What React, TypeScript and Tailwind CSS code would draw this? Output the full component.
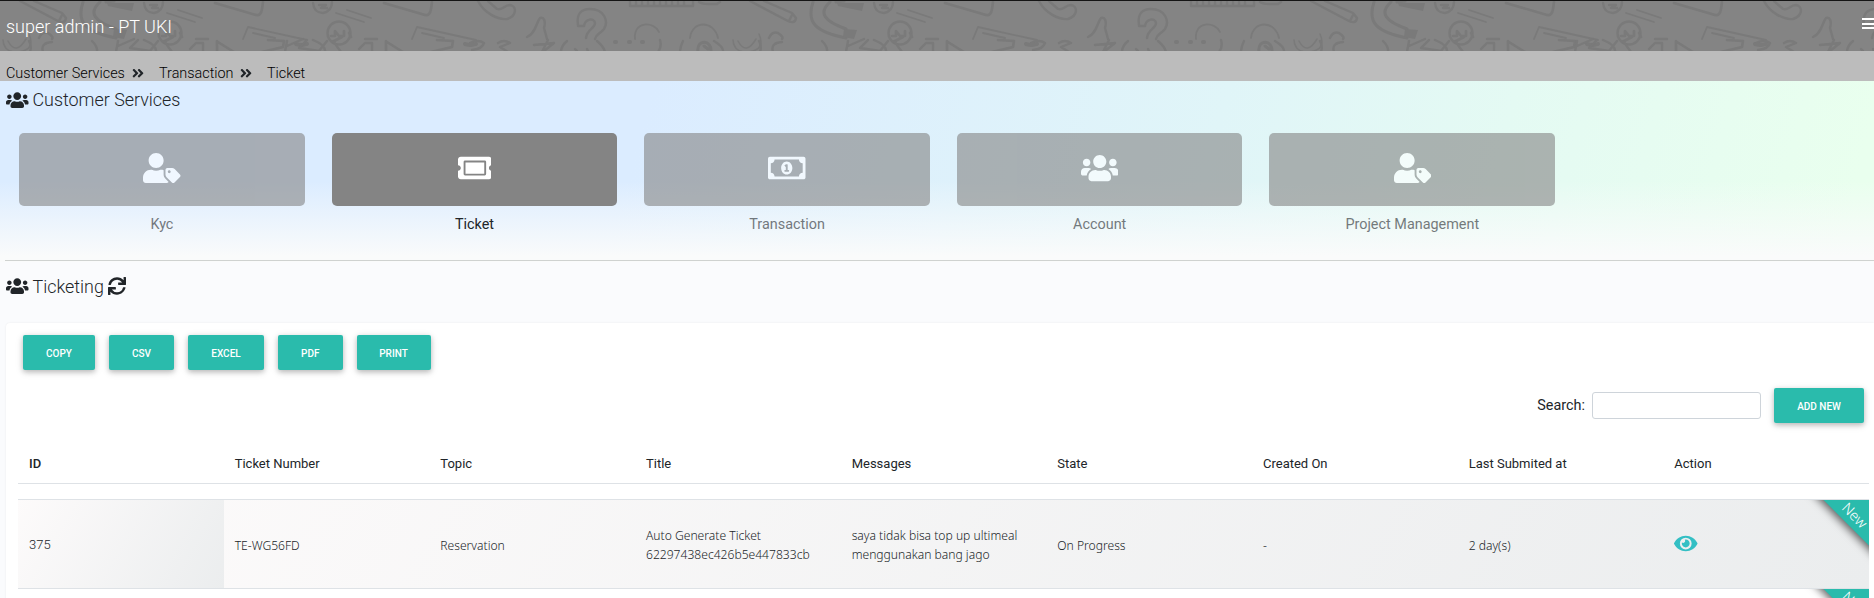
import React from "react";
import {
  FaAngleDoubleRight,
  FaEye,
  FaRegMoneyBillAlt,
  FaSync,
  FaTicketAlt,
  FaUsers,
  FaUserTag,
} from "react-icons/fa";

const services = [
  { name: "Kyc", icon: <FaUserTag className="h-[30px] w-[37.5px]" />, active: false },
  { name: "Ticket", icon: <FaTicketAlt className="h-[30px] w-[33.75px]" />, active: true },
  { name: "Transaction", icon: <FaRegMoneyBillAlt className="h-[30px] w-[37.5px]" />, active: false },
  { name: "Account", icon: <FaUsers className="h-[30px] w-[37.5px]" />, active: false },
  { name: "Project Management", icon: <FaUserTag className="h-[30px] w-[37.5px]" />, active: false },
];

const exports = [
  { name: "Copy", width: "w-[72px]" },
  { name: "CSV", width: "w-[65px]" },
  { name: "Excel", width: "w-[76px]" },
  { name: "PDF", width: "w-[64.5px]" },
  { name: "Print", width: "w-[74px]" },
];

const columns = [
  "ID",
  "Ticket Number",
  "Topic",
  "Title",
  "Messages",
  "State",
  "Created On",
  "Last Submited at",
  "Action",
];

const button =
  "h-[35px] rounded-[2px] bg-[#2abbac] pt-[1px] text-[10px] font-medium uppercase text-white shadow-[0_2px_5px_0_rgba(0,0,0,0.2),0_2px_8px_0_rgba(0,0,0,0.12)]";

function Doodles() {
  return (
    <svg
      className="absolute inset-0 h-full w-full"
      fill="none"
      stroke="#7a7a7a"
      strokeWidth="2.4"
      strokeLinecap="round"
      strokeLinejoin="round"
    >
      <defs>
        <g id="phone">
          <path d="M8 0C14 12 28 19 37 18C47 15 47 5 40 4C34 4 32 10 27 8L18 0" />
          <path d="M57 36C66 32 66 22 70 17C74 16 76 20 74 27L77 38" />
          <path d="M108 24C106 12 112 8 120 8C134 8 139 20 134 28C130 33 126 33 125 38M108 25L114 25C115 18 124 16 125 22C125 28 117 28 116 37" />
          <path d="M160 0V5H223V0M166 1V4M172 1V4M178 1V4M184 1V4M190 1V4M196 1V4M202 1V4M208 1V4M214 1V4M229 1Q232 3 238 3H247L250 1" />
          <path d="M165 38C163 20 184 20 189 31M220 37C222 19 244 19 248 37" strokeWidth="1.8" />
          <path d="M0 42Q8 38 14 42Q12 48 2 49M28 42Q34 38 40 42L30 46L38 51M64 44L84 42L74 50M78 39L72 51M97 40Q91 45 91 51M127 40Q134 46 135 51M190 39Q192 46 188 51M213 40Q210 46 210 51M244 40Q254 46 253 51" />
          <path d="M105 48L107 50M117 48L118 50" />
          <path d="M145 41L146 41M159 41L160 41M172 41L173 41" strokeWidth="4" />
          <path d="M228 51C226 38 242 38 241 51M234 45L238 48" strokeWidth="3" />
          <path d="M263 39Q264 51 276 51M289 33Q296 49 278 51M268 40Q276 55 286 38" strokeWidth="1.5" />
        </g>
        <g id="magnet">
          <path d="M-10 0L26 19Q35 24 36 17L32 12L4 0M32 14L29 20" />
          <path d="M53 1C46 22 56 31 86 37M70 1C58 12 64 20 86 28M76 1L84 0" strokeWidth="3" />
          <path d="M77 2H104L102 10L78 5ZM84 28L97 29L94 38L83 36Z" fill="#7a7a7a" stroke="none" />
          <path d="M9 37Q12 30 18 32Q24 36 22 38M22 41Q10 42 13 51M-1 40Q2 45 0 51M62 40Q68 46 67 51" />
        </g>
        <g id="coin">
          <path d="M14 2Q15 12 24 12Q33 10 33 1M20 4H27L22 7H28" />
          <path d="M37 12L65 21M48 9L72 17" strokeWidth="1.8" />
          <circle cx="40" cy="32" r="11.5" />
          <path d="M32 35H36V30L40 35H45V30M35 40L43 36M50 32L52 36" strokeWidth="2.6" />
          <path d="M85 2L126 14Q131 15 132 8L133 1" strokeWidth="2.6" />
          <path d="M113 38L118 26L177 39M123 32L145 37" strokeWidth="1.8" />
          <path d="M-12 40L-14 51M-12 45L4 38M8 39L0 47L20 50L28 40M14 39Q27 44 26 51M34 40L42 51M60 48L66 42L73 42L73 50M66 38H78" />
          <path d="M87 40V51M88 41L104 51M132 51L153 46L154 40L138 39" strokeWidth="2.6" />
          <path d="M166 43Q172 45 177 43" strokeWidth="4" />
        </g>
      </defs>
      <use href="#phone" x="-260" />
      <use href="#phone" x="470" />
      <use href="#phone" x="1031" />
      <use href="#phone" x="1756" />
      <use href="#magnet" x="30" />
      <use href="#magnet" x="760" />
      <use href="#magnet" x="1321" />
      <use href="#coin" x="130" />
      <use href="#coin" x="299" />
      <use href="#coin" x="860" />
      <use href="#coin" x="1421" />
      <use href="#coin" x="1589" />
    </svg>
  );
}

function Ribbon() {
  return (
    <div className="absolute right-0 top-0 h-[88px] w-[88px] overflow-hidden">
      <div className="absolute -top-[11px] -right-[47px] flex h-[36px] w-[120px] rotate-45 items-end justify-center bg-[#2abbac] pb-[2px] pl-[10px] font-['Noto_Sans'] text-[14.4px] leading-[18px] font-light text-white shadow-[0_3px_8px_rgba(0,0,0,0.6)]">
        New
      </div>
    </div>
  );
}

export default function App() {
  return (
    <div className="flex h-[598px] w-full flex-col overflow-hidden bg-[#fafbfd] font-['Roboto',sans-serif] text-[#212529]">
      <header className="relative flex h-[51px] shrink-0 items-center justify-between overflow-hidden border-t border-[#151515] bg-[#848484] pl-[6px] text-white">
        <Doodles />
        <span className="relative pt-[1px] text-[18px] font-light">super admin - PT UKI</span>
        <span className="relative -mr-[4px] mt-[-5px] flex w-[16px] flex-col gap-[2.5px]">
          <span className="h-[2px] bg-white" />
          <span className="h-[2px] bg-white" />
          <span className="h-[2px] bg-white" />
        </span>
      </header>

      <nav className="flex h-[30px] shrink-0 items-end bg-[#bcbcbc] pl-[6px] text-[14.4px] leading-[14px] font-light text-black">
        <span className="w-[126px]">Customer Services</span>
        <FaAngleDoubleRight className="mb-[1px] w-[12px] text-[#212529]" />
        <span className="ml-[15px] w-[81px]">Transaction</span>
        <FaAngleDoubleRight className="mb-[1px] w-[12px] text-[#212529]" />
        <span className="ml-[15px]">Ticket</span>
      </nav>

      <section className="h-[181px] shrink-0 bg-[linear-gradient(to_bottom,rgba(250,251,253,0)_55%,#fafbfb_97%),linear-gradient(105deg,#dbecff_34%,#e0f5f8_64%,#e4faf3_79%,#e9ffee_98%)] pl-[5px]">
        <h2 className="flex h-[40px] items-center pb-[2px] text-[17.9px] font-light">
          <FaUsers className="mr-[4px] ml-[1px] h-[18px] w-[22.5px]" />
          Customer Services
        </h2>
        <div className="flex h-[140px] border-b border-[#cfd2d0] pt-[12px] pl-[0.6px]">
          {services.map((s) => (
            <div
              key={s.name}
              className={
                s.active
                  ? "flex w-[312.6px] flex-col items-center px-[13.5px]"
                  : "flex w-[312.6px] flex-col items-center px-[13.5px] opacity-60"
              }
            >
              <div className="flex h-[73px] w-full items-center justify-center rounded-[5px] bg-[#848484] pb-[3px] text-white">
                {s.icon}
              </div>
              <span className="mt-[10px] text-[14.4px] leading-[18px]">{s.name}</span>
            </div>
          ))}
        </div>
      </section>

      <h2 className="flex h-[61px] shrink-0 items-start pt-[14px] pl-[5px] text-[17.9px] leading-[22px] font-light">
        <FaUsers className="mt-[1px] mr-[4px] ml-[1px] h-[18px] w-[22.5px]" />
        Ticketing
        <FaSync className="mt-[1px] ml-[4.5px] h-[18px] w-[18px]" />
      </h2>

      <main className="ml-[6px] flex-1 rounded-tl-[4px] bg-white pr-[5px] pl-[12px] shadow-[0_0_2px_rgba(0,0,0,0.08)]">
        <div className="flex gap-[14px] pt-[12px] pl-[5px]">
          {exports.map((b) => (
            <button key={b.name} className={`${button} ${b.width}`}>
              {b.name}
            </button>
          ))}
        </div>
        <div className="mt-[18px] flex items-center justify-end pr-[5px]">
          <label className="flex items-center text-[14.4px]">
            Search:
            <input className="ml-[7px] h-[27px] w-[169px] rounded-[3px] border border-[#ced4da] bg-white" />
          </label>
          <button className={`${button} ml-[13px] w-[90px]`}>Add New</button>
        </div>

        <div className="mt-[20px] grid h-[41px] grid-cols-9 items-center border-b border-[#dee2e6] pt-[2px] text-[13px]">
          {columns.map((c, i) => (
            <span key={c} className={i === 0 ? "pl-[11px] font-medium" : "pl-[11px]"}>
              {c}
            </span>
          ))}
        </div>
        <div className="relative mt-[15px] grid h-[90px] grid-cols-9 border-y border-[#dee2e6] bg-[linear-gradient(120deg,#fdfbfb_0%,#ebedee_100%)] font-['Noto_Sans',sans-serif] text-[12.1px] leading-[19px] font-light">
          <div className="flex items-center bg-[linear-gradient(120deg,#fdfbfb_0%,#ebedee_100%)] pl-[11px] font-['Roboto',sans-serif] text-[13px] font-light text-[#212529]">
            375
          </div>
          <div className="flex items-center pt-[2px] pl-[11px]">TE-WG56FD</div>
          <div className="flex items-center pt-[2px] pl-[11px]">Reservation</div>
          <div className="flex flex-col justify-center pt-[2px] pl-[11px]">
            <span>Auto Generate Ticket</span>
            <span>62297438ec426b5e447833cb</span>
          </div>
          <div className="flex flex-col justify-center pt-[2px] pl-[11px]">
            <span>saya tidak bisa top up ultimeal</span>
            <span>menggunakan bang jago</span>
          </div>
          <div className="flex items-center pt-[2px] pl-[11px]">On Progress</div>
          <div className="flex items-center pt-[2px] pl-[11px]">-</div>
          <div className="flex items-center pt-[2px] pl-[11px]">2 day(s)</div>
          <div className="flex items-center pb-[2px] pl-[11px]">
            <FaEye className="h-[21px] w-[23.5px] text-[#33bfc4]" />
          </div>
          <Ribbon />
        </div>
        <div className="relative h-[10px] overflow-hidden">
          <Ribbon />
        </div>
      </main>
    </div>
  );
}
